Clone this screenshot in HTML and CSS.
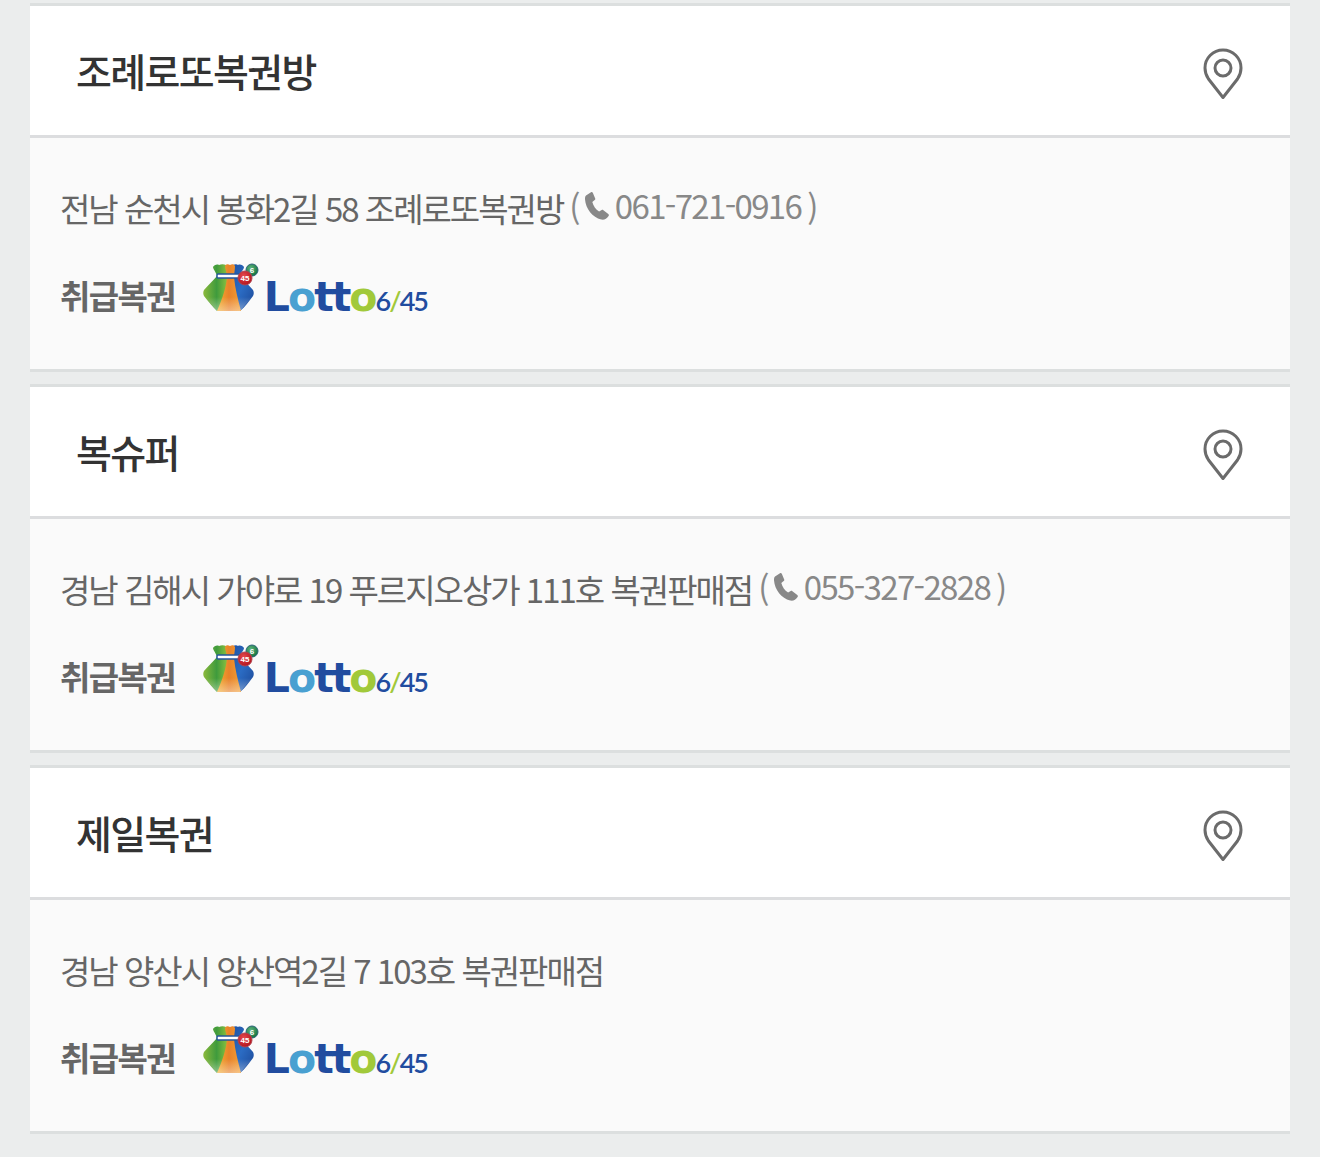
FILE: index.html
```html
<!DOCTYPE html>
<html lang="ko">
<head>
<meta charset="utf-8">
<meta name="viewport" content="width=device-width, initial-scale=1">
<title>복권 판매점</title>
<link rel="stylesheet" href="styles.css">
</head>
<body>
<svg class="defs" width="0" height="0" aria-hidden="true">
  <defs>
    <linearGradient id="green" x1="0" y1="0" x2="1" y2="0"><stop offset="0" stop-color="#8cb93c"/><stop offset=".5" stop-color="#3f9b3d"/><stop offset="1" stop-color="#9cc93f"/></linearGradient>
    <linearGradient id="orange" x1="0" y1="0" x2="1" y2="0"><stop offset="0" stop-color="#f3b02f"/><stop offset=".5" stop-color="#e8822a"/><stop offset="1" stop-color="#f3a035"/></linearGradient>
    <linearGradient id="blue" x1="0" y1="0" x2="1" y2="1"><stop offset="0" stop-color="#1f4f9f"/><stop offset=".5" stop-color="#2b6cc4"/><stop offset="1" stop-color="#1c4795"/></linearGradient>
    <linearGradient id="shine" x1="0" y1="0" x2="0" y2="1"><stop offset=".6" stop-color="#fff" stop-opacity="0"/><stop offset="1" stop-color="#fff" stop-opacity=".4"/></linearGradient>
    <radialGradient id="red-ball" cx=".4" cy=".35" r=".65"><stop offset="0" stop-color="#e5484d"/><stop offset="1" stop-color="#b5161f"/></radialGradient>
    <radialGradient id="green-ball" cx=".4" cy=".35" r=".65"><stop offset="0" stop-color="#5cb47c"/><stop offset="1" stop-color="#16743f"/></radialGradient>
  </defs>
  <symbol id="pin" viewBox="0 0 42 53">
    <path d="M21 50.500 6.500 32C4.200 28.600 3 25 3 21a18 18 0 0 1 36 0c0 4-1.200 7.600-3.500 11Z" fill="none" stroke="#6b6b6b" stroke-width="3" stroke-linejoin="round"/>
    <circle cx="21" cy="21" r="8" fill="none" stroke="#6b6b6b" stroke-width="3"/>
  </symbol>
  <symbol id="phone" viewBox="0 0 24 28">
    <path d="M1 3.500 6 .3c.8-.4 1.500-.2 1.900.6l2.300 5.500c.3.700.1 1.300-.5 1.700L7.300 9.900c1 4 3.400 7.300 6.800 9.600l2.600-1.500c.6-.4 1.200-.3 1.700.2l4.900 3.900c.6.500.7 1.200.3 1.900-1.800 2.600-4.400 4.200-7.400 3.500C7.500 25.300.7 16.800 0 7.200-.1 5.600.2 4.300 1 3.500Z" fill="#888"/>
  </symbol>
  <symbol id="bag" viewBox="0 0 58 48">
    <path d="M14 13C13 9 10 6 10 4c1-2 4-3 6-2 2-1 5-1 7 0l4 12-8 34h-5C10 44 5 38 1 33c-1-2-1-4 0-6 4-5 9-9 13-14Z" fill="url(#green)"/>
    <path d="M30 2c2-1 4-1 5 0 2-1 5 0 6 2 0 3-4 5-4 9 4 5 9 9 13 14 1 2 1 4 0 6-4 5-8 11-13 15h-5L27 14Z" fill="url(#blue)"/>
    <path d="M24 14c0-4-2-8-2-11 1-2 3-2 5-1 2-1 4-1 5 1 0 4-1 7-1 11 1 11 4 23 7 34H14c5-11 9-23 10-34Z" fill="url(#orange)"/>
    <path d="M1 33c-1-2-1-4 0-6L14 13h23l13 14c1 2 1 4 0 6L37 48H14Z" fill="url(#shine)"/>
    <rect x="14" y="11" width="25" height="4" rx="1" fill="#fff" stroke="#25569c" stroke-width="1.500"/>
    <circle cx="49" cy="7" r="6" fill="url(#green-ball)" stroke="#2b6478"/>
    <circle cx="42" cy="15" r="7" fill="url(#red-ball)" stroke="#b04450"/>
  </symbol>
</svg>
<main class="stores">
  <article class="store">
    <header class="store-head">
      <h2 class="name">조례로또복권방</h2>
      <button class="map" type="button" aria-label="지도 보기"><svg class="pin"><use href="#pin"/></svg></button>
    </header>
    <div class="detail">
      <div class="address"><span class="place">전남 순천시 봉화2길 58 조례로또복권방</span><span class="contact"><span>(</span><a class="tel" href="tel:0617210916"><svg class="phone" aria-hidden="true"><use href="#phone"/></svg>061-721-0916</a><span>)</span></span></div>
      <div class="goods">
        <strong class="label">취급복권</strong>
        <span class="lotto"><svg class="bag"><use href="#bag"/><text class="ball" x="49" y="10">6</text><text class="ball" x="42" y="18">45</text></svg><span class="word">L<span class="sky">o</span>tt<span class="lime">o</span></span><span class="count">6<span class="lime">/</span>45</span></span>
      </div>
    </div>
  </article>
  <article class="store">
    <header class="store-head">
      <h2 class="name">복슈퍼</h2>
      <button class="map" type="button" aria-label="지도 보기"><svg class="pin"><use href="#pin"/></svg></button>
    </header>
    <div class="detail">
      <div class="address"><span class="place">경남 김해시 가야로 19 푸르지오상가 111호 복권판매점</span><span class="contact"><span>(</span><a class="tel" href="tel:0553272828"><svg class="phone" aria-hidden="true"><use href="#phone"/></svg>055-327-2828</a><span>)</span></span></div>
      <div class="goods">
        <strong class="label">취급복권</strong>
        <span class="lotto"><svg class="bag"><use href="#bag"/><text class="ball" x="49" y="10">6</text><text class="ball" x="42" y="18">45</text></svg><span class="word">L<span class="sky">o</span>tt<span class="lime">o</span></span><span class="count">6<span class="lime">/</span>45</span></span>
      </div>
    </div>
  </article>
  <article class="store">
    <header class="store-head">
      <h2 class="name">제일복권</h2>
      <button class="map" type="button" aria-label="지도 보기"><svg class="pin"><use href="#pin"/></svg></button>
    </header>
    <div class="detail">
      <div class="address"><span class="place">경남 양산시 양산역2길 7 103호 복권판매점</span></div>
      <div class="goods">
        <strong class="label">취급복권</strong>
        <span class="lotto"><svg class="bag"><use href="#bag"/><text class="ball" x="49" y="10">6</text><text class="ball" x="42" y="18">45</text></svg><span class="word">L<span class="sky">o</span>tt<span class="lime">o</span></span><span class="count">6<span class="lime">/</span>45</span></span>
      </div>
    </div>
  </article>
</main>
</body>
</html>
```
FILE: styles.css
```css
* { box-sizing: border-box; }
body {
  margin: 0;
  background: #ebeded;
  color: #666;
  font-family: "Noto Sans CJK KR", sans-serif;
  font-size: 33px;
  line-height: 48px;
  letter-spacing: -0.05em;
}
.defs { position: absolute; }
.stores {
  display: flex;
  flex-direction: column;
  gap: 12px;
  padding: 3px 30px 23px;
}
.store {
  border-top: 3px solid #dcdfdf;
  border-bottom: 3px solid #dcdfdf;
  background: #fafafa;
}
.store-head {
  display: flex;
  align-items: flex-start;
  justify-content: space-between;
  padding: 36px 46px 35px;
  border-bottom: 3px solid #dcdddf;
  background: #fff;
}
.name {
  margin: 0;
  color: #333;
  font-size: 39px;
  font-weight: 500;
  line-height: 57px;
}
.map {
  display: flex;
  padding: 5px 0 0;
  border: 0;
  background: none;
  cursor: pointer;
}
.pin { width: 42px; height: 53px; }
.detail { padding: 46px 30px 50px; }
.address {
  display: flex;
  flex-wrap: wrap;
  gap: 0 6px;
}
.place { letter-spacing: -2px; }
.contact {
  display: flex;
  gap: 6px;
  color: #888;
  line-height: 46px;
}
.tel {
  display: flex;
  gap: 6px;
  color: inherit;
  line-height: 42px;
  text-decoration: none;
}
.phone { width: 24px; height: 28px; margin-top: 8px; }
.goods {
  display: flex;
  align-items: flex-start;
  gap: 28px;
  padding-top: 31px;
}
.label { padding-top: 8px; font-weight: 700; }
.lotto {
  display: flex;
  align-items: baseline;
  color: #214c9f;
  letter-spacing: 0;
}
.bag { width: 58px; height: 48px; }
.ball {
  fill: #fff;
  font: 700 8px "Liberation Sans", sans-serif;
  text-anchor: middle;
}
.word {
  padding-left: 3px;
  font: 700 41px/44px "DejaVu Sans", sans-serif;
  letter-spacing: -2px;
}
.count {
  font: 600 27px/32px Lato, sans-serif;
  letter-spacing: -2px;
}
.sky { color: #49a0d1; }
.lime { color: #a1c93a; }
```
